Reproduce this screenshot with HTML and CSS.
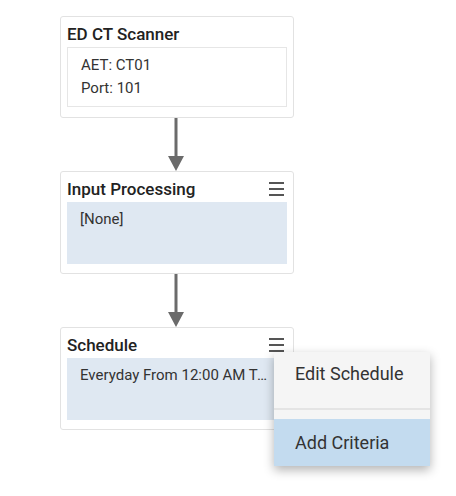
FILE: index.html
```html
<!DOCTYPE html>
<html lang="en">
<head>
  <meta charset="UTF-8">
  <meta name="viewport" content="width=device-width, initial-scale=1.0">
  <title>Workflow</title>
  <link rel="stylesheet" href="styles.css">
</head>
<body>
  <div class="flow">
    <div class="node source">
      <div class="node-title">ED CT Scanner</div>
      <div class="node-body plain">
        <div>AET: CT01</div>
        <div>Port: 101</div>
      </div>
    </div>

    <div class="arrow">
      <svg width="20" height="53" viewBox="0 0 20 53">
        <line x1="10" y1="0" x2="10" y2="40" stroke="#6b6b6b" stroke-width="3"/>
        <polygon points="2,38 18,38 10,53" fill="#6b6b6b"/>
      </svg>
    </div>

    <div class="node">
      <div class="node-title">
        Input Processing
        <span class="menu-icon"><i></i><i></i><i></i></span>
      </div>
      <div class="node-body shaded">
        <div>[None]</div>
      </div>
    </div>

    <div class="arrow">
      <svg width="20" height="53" viewBox="0 0 20 53">
        <line x1="10" y1="0" x2="10" y2="40" stroke="#6b6b6b" stroke-width="3"/>
        <polygon points="2,38 18,38 10,53" fill="#6b6b6b"/>
      </svg>
    </div>

    <div class="node has-menu">
      <div class="node-title">
        Schedule
        <span class="menu-icon"><i></i><i></i><i></i></span>
      </div>
      <div class="node-body shaded clipped">
        <div class="clip">Everyday From 12:00 AM To 11:59 PM</div>
      </div>

      <div class="dropdown">
        <div class="dropdown-item first">Edit Schedule</div>
        <div class="dropdown-divider"></div>
        <div class="dropdown-item active">Add Criteria</div>
      </div>
    </div>
  </div>
</body>
</html>
```

FILE: styles.css
```css
html, body {
  margin: 0;
  min-height: 496px;
}
body {
  font-family: Roboto, 'Liberation Sans', sans-serif;
  color: #333;
  background: #fff;
}
.flow {
  display: flex;
  flex-direction: column;
  align-items: flex-start;
  padding: 16px 0 0 60px;
}
.node {
  width: 220px;
  border: 1px solid #e2e2e2;
  border-radius: 3px;
  padding: 0 6px 9px;
  background: #fff;
}
.node.source {
  padding-bottom: 10px;
}
.node.has-menu {
  position: relative;
}
.node-title {
  display: flex;
  justify-content: space-between;
  align-items: center;
  height: 27px;
  padding-top: 3px;
  font-size: 17px;
  font-weight: 500;
  color: #222;
}
.menu-icon {
  display: flex;
  flex-direction: column;
  gap: 4px;
  width: 15px;
  margin-right: 3px;
}
.menu-icon i {
  display: block;
  height: 2px;
  background: #555;
}
.node-body {
  padding: 6px 13px;
  font-size: 15px;
  line-height: 23px;
  color: #333;
}
.node-body.plain {
  border: 1px solid #e6e6e6;
}
.node-body.shaded {
  background: #dfe8f2;
  min-height: 50px;
}
.node-body.clipped {
  padding-right: 15px;
  padding-left: 13px;
}
.clip {
  white-space: nowrap;
  overflow: hidden;
  text-overflow: ellipsis;
}
.arrow {
  width: 232px;
  display: flex;
  justify-content: center;
  height: 53px;
}
.arrow svg {
  display: block;
}
.dropdown {
  position: absolute;
  left: 213px;
  top: 24px;
  width: 156px;
  background: #f5f5f5;
  box-shadow: 0 4px 10px rgba(0, 0, 0, 0.3);
  font-size: 18px;
  color: #333;
}
.dropdown-item {
  padding: 0 21px;
  line-height: 24px;
}
.dropdown-item.first {
  padding-top: 10px;
  height: 46px;
}
.dropdown-divider {
  height: 2px;
  background: #e4e4e4;
  margin-bottom: 9px;
}
.dropdown-item.active {
  background: #c3dbef;
  padding-top: 12px;
  height: 35px;
}
```
